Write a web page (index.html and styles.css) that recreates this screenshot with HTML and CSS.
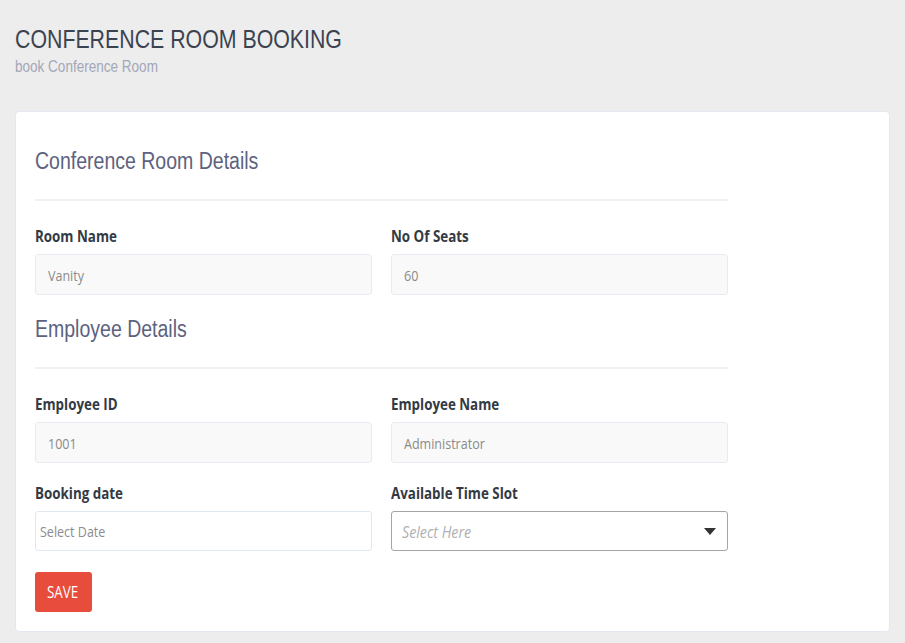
FILE: index.html
```html
<!DOCTYPE html>
<html>
<head>
<meta charset="utf-8">
<link rel="stylesheet" href="styles.css">
</head>
<body>
<header class="page-head">
  <h1 class="page-title"><span class="squeeze">CONFERENCE ROOM BOOKING</span></h1>
  <div class="page-sub"><span class="squeeze">book Conference Room</span></div>
</header>
<main class="card">
  <div class="form">
    <h2 class="section-title"><span class="squeeze">Conference Room Details</span></h2>
    <hr class="rule">
    <div class="row">
      <div class="field">
        <label class="label"><span class="sq">Room Name</span></label>
        <div class="input disabled"><span class="sq">Vanity</span></div>
      </div>
      <div class="field">
        <label class="label"><span class="sq">No Of Seats</span></label>
        <div class="input disabled"><span class="sq">60</span></div>
      </div>
    </div>
    <h2 class="section-title second"><span class="squeeze">Employee Details</span></h2>
    <hr class="rule">
    <div class="row">
      <div class="field">
        <label class="label"><span class="sq">Employee ID</span></label>
        <div class="input disabled"><span class="sq">1001</span></div>
      </div>
      <div class="field">
        <label class="label"><span class="sq">Employee Name</span></label>
        <div class="input disabled"><span class="sq">Administrator</span></div>
      </div>
    </div>
    <div class="row">
      <div class="field">
        <label class="label"><span class="sq">Booking date</span></label>
        <div class="input date"><span class="sq">Select Date</span></div>
      </div>
      <div class="field">
        <label class="label"><span class="sq">Available Time Slot</span></label>
        <div class="input select"><span class="sq ph">Select Here</span><span class="caret"></span></div>
      </div>
    </div>
    <button class="btn-save"><span class="sq">SAVE</span></button>
  </div>
</main>
</body>
</html>
```
FILE: styles.css
```css
html, body { margin: 0; padding: 0; }
body {
  background: #ededed;
  width: 905px;
  height: 643px;
  overflow: hidden;
  font-family: "Open Sans", "Liberation Sans", sans-serif;
}
.squeeze {
  display: inline-block;
  transform: scaleX(0.82);
  transform-origin: left center;
  white-space: nowrap;
}
.sq {
  display: inline-block;
  transform: scaleX(0.835);
  transform-origin: left center;
  white-space: nowrap;
}
.page-head { padding: 25px 15px 0 15px; height: 85px; box-sizing: border-box; }
.page-title {
  margin: 0;
  font-family: "Liberation Sans", Arial, sans-serif;
  font-weight: normal;
  font-size: 26px;
  line-height: 28px;
  color: #3b4350;
}
.page-sub {
  margin-top: 3px;
  font-family: "Liberation Sans", Arial, sans-serif;
  font-size: 16.5px;
  line-height: 20px;
  color: #a3a7b8;
}
.card {
  margin: 26px 15px 0 15px;
  height: 521px;
  box-sizing: border-box;
  background: #fff;
  border: 1px solid #e3e8f0;
  border-radius: 4px;
  padding: 34px 19px 0 19px;
}
.form { width: 693px; }
.section-title {
  margin: 0;
  font-family: "Liberation Sans", Arial, sans-serif;
  font-weight: normal;
  font-size: 23.5px;
  line-height: 30px;
  color: #5d6280;
}
.section-title .squeeze { transform: scaleX(0.83); }
.section-title.second { margin-top: 19px; }
.rule { border: 0; border-top: 2px solid #f0f1f3; margin: 23px 0 24px 0; }
.row { display: grid; grid-template-columns: 337px 337px; column-gap: 19px; }
.row + .row { margin-top: 19px; }
.field { display: flex; flex-direction: column; }
.label {
  display: block;
  font-weight: 700;
  font-size: 16px;
  line-height: 22px;
  color: #333a44;
  margin-bottom: 7px;
}
.input {
  height: 41px;
  box-sizing: border-box;
  border: 1px solid #e8ecf2;
  border-radius: 3px;
  padding: 0 12px;
  display: flex;
  align-items: center;
  font-size: 15px;
  color: #8a8a8a;
}
.input.disabled { background: #f9f9f9; }
.input.date { background: #fff; border-color: #dfe7f1; padding-left: 4px; color: #8c8c8c; height: 40px; }
.input.select { background: #fff; border-color: #a5a5a5; padding: 0 10px; justify-content: space-between; height: 40px; }
.ph { font-style: italic; color: #b0b0b0; font-size: 17px; }
.caret {
  width: 0; height: 0;
  border-left: 6px solid transparent;
  border-right: 6px solid transparent;
  border-top: 7px solid #333;
  margin-right: 1px;
}
.btn-save {
  display: block;
  margin-top: 21px;
  width: 57px;
  height: 40px;
  border: 0;
  border-radius: 3px;
  background: #e84c3d;
  color: #fff;
  font-family: "Open Sans", sans-serif;
  font-size: 16px;
  padding: 0 0 0 12px;
  text-align: left;
}
```
